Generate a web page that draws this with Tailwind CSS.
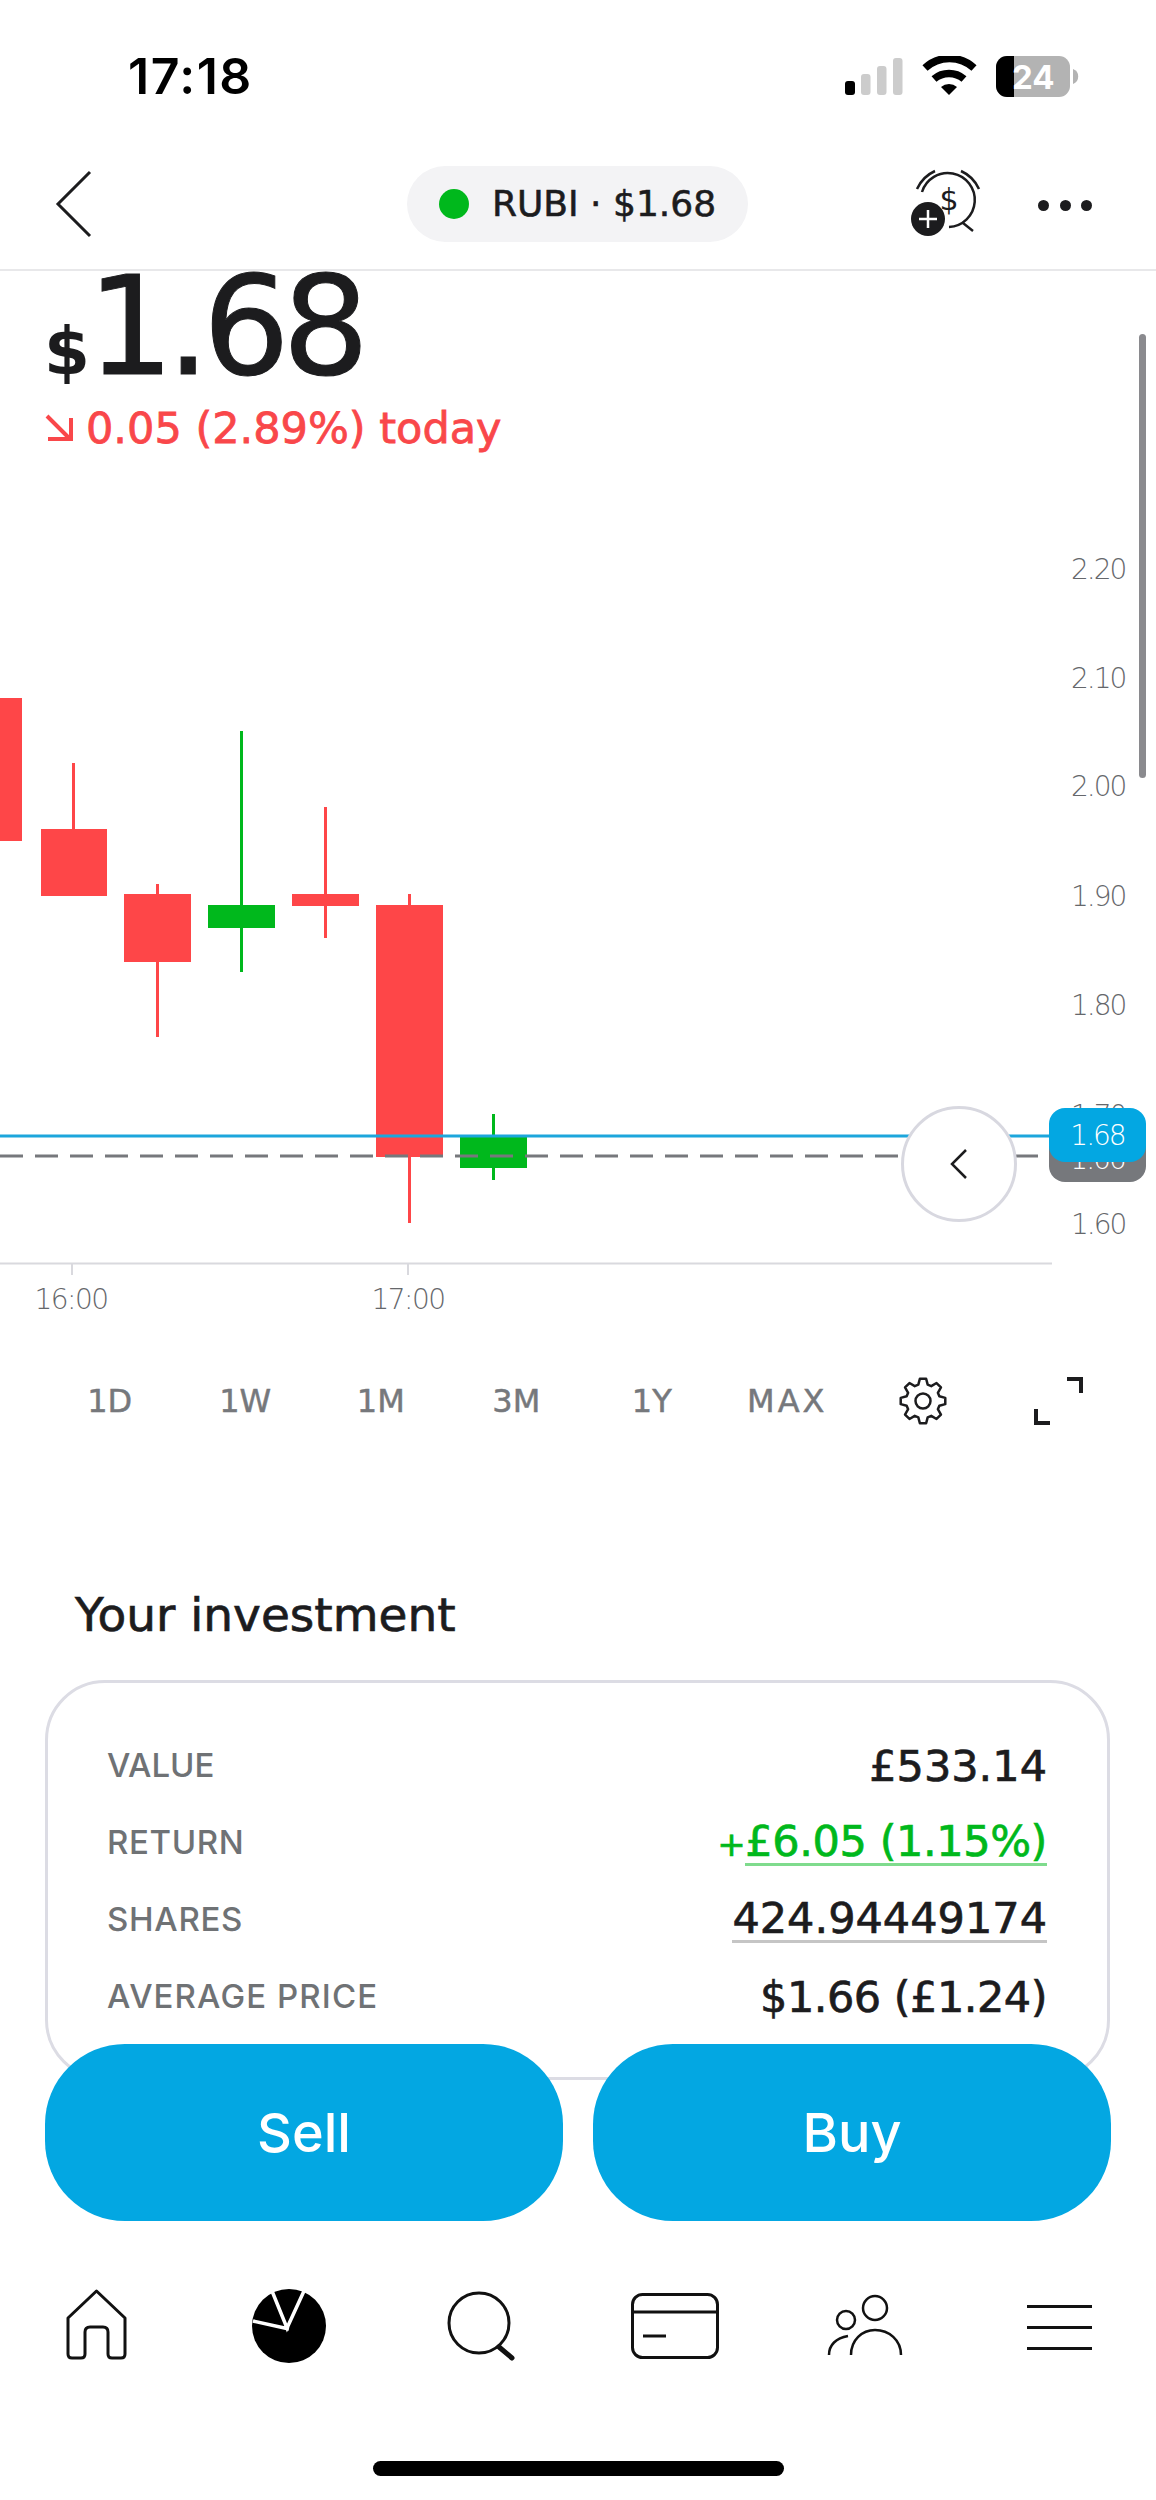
<!DOCTYPE html>
<html lang="en">
  <head>
    <meta charset="UTF-8" />
    <meta name="viewport" content="width=device-width, initial-scale=1.0" />
    <title>RUBI</title>
    <script src="https://cdn.jsdelivr.net/npm/@tailwindcss/browser@4"></script>
  </head>
  <body class="bg-white font-['Inter',sans-serif] text-[#1c1c1e]">
    <div class="relative w-[1156px] h-[2500px] overflow-hidden flex flex-col">
      <!-- scrollbar -->
      <div class="absolute left-[1139px] top-[334px] w-[7px] h-[444px] rounded-full bg-[#8a8a8e] z-20"></div>

      <!-- status bar -->
      <div class="h-[110px] flex items-start shrink-0">
        <span class="ml-[128px] mt-[47px] text-[50px] leading-[58px] font-semibold text-black tracking-[1.5px]">17:18</span>
        <svg class="ml-auto mr-[73px] mt-[56px]" width="240" height="44" viewBox="843 56 240 44">
          <rect x="845" y="81" width="10" height="14" rx="3" fill="#000" />
          <rect x="861" y="74" width="9.5" height="21" rx="3" fill="#ccc" />
          <rect x="877" y="66" width="9.5" height="29" rx="3" fill="#ccc" />
          <rect x="893" y="58" width="9.5" height="37" rx="3" fill="#ccc" />
          <path d="M925 68 A36 36 0 0 1 974 68" fill="none" stroke="#000" stroke-width="7.5" />
          <path d="M934 79 A23 23 0 0 1 964 79" fill="none" stroke="#000" stroke-width="7.5" />
          <path d="M941 87 L949 95 L957 87 A12 12 0 0 0 941 87 Z" fill="#000" />
          <path d="M1073 69 A8 8 0 0 1 1073 84 Z" fill="#b3b3b3" />
          <rect x="996" y="56" width="74" height="41" rx="11" fill="#b3b3b3" />
          <path d="M1014 56 H1007 A11 11 0 0 0 996 67 V86 A11 11 0 0 0 1007 97 H1014 Z" fill="#000" />
        </svg>
        <span class="absolute left-[1012px] top-[52px] text-[33px] leading-[50px] font-bold text-white">24</span>
      </div>

      <!-- header -->
      <div class="h-[161px] shrink-0 border-b-[2px] border-[#e8e8ea] flex items-center pt-[29px]">
        <svg class="ml-[55px] shrink-0" width="38" height="70" viewBox="0 0 38 70">
          <path d="M35 3 L3 35 L35 67" fill="none" stroke="#1c1c1e" stroke-width="3" />
        </svg>
        <div class="ml-[314px] w-[341px] h-[76px] shrink-0 rounded-full bg-[#f3f3f5] flex items-center">
          <span class="ml-[32px] w-[30px] h-[30px] rounded-full bg-[#00b81c]"></span>
          <span class="ml-[23px] font-['DejaVu_Sans',sans-serif] text-[36px] leading-[40px] [-webkit-text-stroke:0.6px] whitespace-nowrap">RUBI · $1.68</span>
        </div>
        <svg class="ml-[162px] shrink-0" width="74" height="72" viewBox="910 172 74 72">
          <path d="M922 196 A27 27 0 1 1 949 231" fill="none" stroke="#1c1c1e" stroke-width="2.5" />
          <path d="M917 193 A36 36 0 0 1 935 175" fill="none" stroke="#1c1c1e" stroke-width="2.5" />
          <path d="M961 175 A36 36 0 0 1 979 193" fill="none" stroke="#1c1c1e" stroke-width="2.5" />
          <path d="M963 227 L973 235" fill="none" stroke="#1c1c1e" stroke-width="2.5" />
          <text x="949" y="214" font-size="30" text-anchor="middle" font-family="DejaVu Sans" fill="#1c1c1e">$</text>
          <circle cx="928" cy="223" r="17" fill="#1c1c1e" />
          <path d="M928 214 V232 M919 223 H937" stroke="#fff" stroke-width="2.5" />
        </svg>
        <div class="ml-[54px] mt-[2px] flex gap-[10.5px] shrink-0">
          <span class="w-[11px] h-[11px] rounded-full bg-[#1c1c1e]"></span>
          <span class="w-[11px] h-[11px] rounded-full bg-[#1c1c1e]"></span>
          <span class="w-[11px] h-[11px] rounded-full bg-[#1c1c1e]"></span>
        </div>
      </div>

      <!-- price -->
      <div class="h-[199px] shrink-0 pl-[44px]">
        <div class="flex items-baseline h-[112px] leading-[112px] font-['DejaVu_Sans',sans-serif]">
          <span class="text-[66px] font-bold">$</span>
          <span class="-ml-[3px] text-[137px] font-normal tracking-[-7.5px] [-webkit-text-stroke:1px]">1.68</span>
        </div>
        <div class="flex items-center mt-[15px] text-[#f9474a] font-['DejaVu_Sans',sans-serif] text-[43px] leading-[60px] [-webkit-text-stroke:0.8px]">
          <svg class="mr-[12px]" width="30" height="30" viewBox="0 0 30 30">
            <path d="M3 3 L26 26 M4 26 H27 V5" fill="none" stroke="#f9474a" stroke-width="4" />
          </svg>
          <span>0.05 (2.89%) today</span>
        </div>
      </div>

      <!-- chart -->
      <div class="relative h-[850px] shrink-0">
        <svg class="absolute inset-0" width="1156" height="850" viewBox="0 470 1156 850">
          <g fill="#fe4648">
            <rect x="0" y="698" width="22" height="143" />
            <rect x="72" y="763" width="3" height="70" />
            <rect x="41" y="829" width="66" height="67" />
            <rect x="156" y="884" width="3" height="153" />
            <rect x="124" y="894" width="67" height="68" />
            <rect x="324" y="807" width="3" height="131" />
            <rect x="292" y="894" width="67" height="12" />
            <rect x="408" y="894" width="3" height="329" />
            <rect x="376" y="905" width="67" height="252" />
          </g>
          <g fill="#00b81c">
            <rect x="240" y="731" width="3" height="241" />
            <rect x="208" y="905" width="67" height="23" />
            <rect x="492" y="1114" width="3" height="66" />
            <rect x="460" y="1136" width="67" height="32" />
          </g>
          <line x1="0" y1="1156" x2="1050" y2="1156" stroke="#76787c" stroke-width="3" stroke-dasharray="23 12" />
          <line x1="0" y1="1136" x2="1050" y2="1136" stroke="#1ca6dc" stroke-width="3" />
          <line x1="0" y1="1263.5" x2="1052" y2="1263.5" stroke="#d9d9de" stroke-width="2" />
          <line x1="72" y1="1263" x2="72" y2="1275" stroke="#d9d9de" stroke-width="2" />
          <line x1="408" y1="1263" x2="408" y2="1275" stroke="#d9d9de" stroke-width="2" />
        </svg>

        <span class="absolute left-[1071px] top-[100px] -translate-y-1/2 font-['DejaVu_Sans',sans-serif] text-[28px] font-extralight text-[#65676b] tracking-[-2px]">2.20</span>
        <span class="absolute left-[1071px] top-[209px] -translate-y-1/2 font-['DejaVu_Sans',sans-serif] text-[28px] font-extralight text-[#65676b] tracking-[-2px]">2.10</span>
        <span class="absolute left-[1071px] top-[317px] -translate-y-1/2 font-['DejaVu_Sans',sans-serif] text-[28px] font-extralight text-[#65676b] tracking-[-2px]">2.00</span>
        <span class="absolute left-[1071px] top-[427px] -translate-y-1/2 font-['DejaVu_Sans',sans-serif] text-[28px] font-extralight text-[#65676b] tracking-[-2px]">1.90</span>
        <span class="absolute left-[1071px] top-[536px] -translate-y-1/2 font-['DejaVu_Sans',sans-serif] text-[28px] font-extralight text-[#65676b] tracking-[-2px]">1.80</span>
        <span class="absolute left-[1071px] top-[646px] -translate-y-1/2 font-['DejaVu_Sans',sans-serif] text-[28px] font-extralight text-[#65676b] tracking-[-2px]">1.70</span>
        <span class="absolute left-[1071px] top-[755px] -translate-y-1/2 font-['DejaVu_Sans',sans-serif] text-[28px] font-extralight text-[#65676b] tracking-[-2px]">1.60</span>

        <span class="absolute left-[71px] top-[830px] -translate-x-1/2 -translate-y-1/2 font-['DejaVu_Sans',sans-serif] text-[28px] font-extralight text-[#65676b] tracking-[-1.5px]">16:00</span>
        <span class="absolute left-[408px] top-[830px] -translate-x-1/2 -translate-y-1/2 font-['DejaVu_Sans',sans-serif] text-[28px] font-extralight text-[#65676b] tracking-[-1.5px]">17:00</span>

        <!-- price tags -->
        <div class="absolute left-[1049px] top-[660px] w-[97px] h-[52px] rounded-[16px] bg-[#76787c] flex items-end justify-center text-white font-['DejaVu_Sans',sans-serif] text-[28px] font-extralight leading-[44px] tracking-[-2px]">1.66</div>
        <div class="absolute left-[1049px] top-[638px] w-[97px] h-[54px] pt-[2px] rounded-[16px] bg-[#03a7e2] flex items-center justify-center text-white font-['DejaVu_Sans',sans-serif] text-[28px] font-extralight tracking-[-2px]">1.68</div>

        <!-- scroll to latest -->
        <div class="absolute left-[901px] top-[636px] w-[116px] h-[116px] rounded-full bg-white border-[3px] border-[#d8d8e0] flex items-center justify-center">
          <svg width="18" height="32" viewBox="0 0 18 32">
            <path d="M16 2 L2 16 L16 30" fill="none" stroke="#1c1c1e" stroke-width="2.5" />
          </svg>
        </div>
      </div>

      <!-- ranges -->
      <div class="h-[162px] shrink-0 pl-[42px] flex items-start font-['DejaVu_Sans',sans-serif] text-[32px] leading-[40px] [-webkit-text-stroke:0.5px] text-[#76787c]">
        <span class="w-[135.5px] mt-[61px] text-center">1D</span>
        <span class="w-[135.5px] mt-[61px] text-center">1W</span>
        <span class="w-[135.5px] mt-[61px] text-center">1M</span>
        <span class="w-[135.5px] mt-[61px] text-center">3M</span>
        <span class="w-[135.5px] mt-[61px] text-center">1Y</span>
        <span class="w-[135.5px] mt-[61px] text-center tracking-[3px]">MAX</span>
        <span class="w-[135.5px] mt-[57px] flex justify-center">
          <svg width="48" height="48" viewBox="0 0 48 48">
            <polygon points="19.31,7.66 20.87,1.72 27.13,1.72 28.69,7.66 32.24,9.13 37.54,6.03 41.97,10.46 38.87,15.76 40.34,19.31 46.28,20.87 46.28,27.13 40.34,28.69 38.87,32.24 41.97,37.54 37.54,41.97 32.24,38.87 28.69,40.34 27.13,46.28 20.87,46.28 19.31,40.34 15.76,38.87 10.46,41.97 6.03,37.54 9.13,32.24 7.66,28.69 1.72,27.13 1.72,20.87 7.66,19.31 9.13,15.76 6.03,10.46 10.46,6.03 15.76,9.13" fill="none" stroke="#1c1c1e" stroke-width="2.5" stroke-linejoin="round" />
            <circle cx="24" cy="24" r="7.5" fill="none" stroke="#1c1c1e" stroke-width="2.5" />
          </svg>
        </span>
        <span class="w-[135.5px] mt-[56px] flex justify-center">
          <svg width="50" height="50" viewBox="0 0 50 50">
            <path d="M34 3 H48 V17 M3 33 V47 H17" fill="none" stroke="#1c1c1e" stroke-width="4" />
          </svg>
        </span>
      </div>

      <!-- your investment -->
      <div class="ml-[75px] mt-[100px] h-[66px] shrink-0 flex items-center font-['DejaVu_Sans',sans-serif] text-[47px] [-webkit-text-stroke:0.7px]">Your investment</div>

      <div class="mt-[32px] ml-[45px] w-[1065px] h-[400px] shrink-0 rounded-[60px] border-[3px] border-[#dcdce4] pt-[44px] pl-[59px] pr-[60px]">
        <div class="h-[77px] flex items-center justify-between">
          <span class="text-[33px] font-medium text-[#6f7275]">VALUE</span>
          <span class="font-['DejaVu_Sans',sans-serif] text-[43px] leading-[44px] [-webkit-text-stroke:0.7px]">£533.14</span>
        </div>
        <div class="h-[77px] flex items-center justify-between">
          <span class="text-[33px] font-medium text-[#6f7275] tracking-[0.6px]">RETURN</span>
          <span class="font-['DejaVu_Sans',sans-serif] text-[43px] leading-[44px] [-webkit-text-stroke:0.7px] text-[#00b81c] tracking-[-0.4px]"><span class="text-[34px]">+</span><span class="inline-block border-b-[3px] border-[#00b81c]/50">£6.05 (1.15%)</span></span>
        </div>
        <div class="h-[77px] flex items-center justify-between">
          <span class="text-[33px] font-medium text-[#6f7275] tracking-[0.7px]">SHARES</span>
          <span class="font-['DejaVu_Sans',sans-serif] text-[43px] leading-[44px] [-webkit-text-stroke:0.7px] border-b-[3px] border-[#c5c5c5]">424.94449174</span>
        </div>
        <div class="h-[77px] flex items-center justify-between">
          <span class="text-[33px] font-medium text-[#6f7275] tracking-[1.1px]">AVERAGE PRICE</span>
          <span class="font-['DejaVu_Sans',sans-serif] text-[43px] leading-[44px] [-webkit-text-stroke:0.7px] tracking-[-0.5px]">$1.66 (£1.24)</span>
        </div>
      </div>

      <!-- sell / buy overlaps the card -->
      <div class="-mt-[36px] ml-[45px] flex gap-[30px] h-[177px] shrink-0 relative">
        <div class="w-[518px] rounded-[80px] bg-[#03a7e2] flex items-center justify-center text-white text-[54px] font-medium">Sell</div>
        <div class="w-[518px] rounded-[80px] bg-[#03a7e2] flex items-center justify-center text-white text-[54px] font-medium">Buy</div>
      </div>

      <!-- bottom nav -->
      <div class="h-[210px] shrink-0">
        <svg width="1156" height="210" viewBox="0 2221 1156 210">
          <!-- home -->
          <path d="M96.5 2291 L68 2318 V2354 Q68 2358 72 2358 H81 Q85 2358 85 2354 V2332 Q85 2327 90 2327 H103 Q108 2327 108 2332 V2354 Q108 2358 112 2358 H121 Q125 2358 125 2354 V2318 Z" fill="none" stroke="#111" stroke-width="3" stroke-linejoin="round" />
          <!-- portfolio -->
          <circle cx="289" cy="2326" r="37" fill="#000" />
          <path d="M272 2291 L287 2328 L304 2291 M253 2321 L289 2329" fill="none" stroke="#fff" stroke-width="3.5" />
          <!-- search -->
          <circle cx="479" cy="2323" r="30" fill="none" stroke="#111" stroke-width="3" />
          <path d="M499 2347 L512 2358" fill="none" stroke="#111" stroke-width="5" stroke-linecap="round" />
          <!-- card -->
          <rect x="632.5" y="2294.5" width="85" height="63" rx="10" fill="none" stroke="#111" stroke-width="3" />
          <path d="M632 2312 H718" stroke="#111" stroke-width="3" />
          <path d="M643 2336 H666" stroke="#111" stroke-width="3" />
          <!-- people -->
          <circle cx="875" cy="2308" r="12" fill="none" stroke="#111" stroke-width="2.5" />
          <circle cx="846" cy="2320" r="9" fill="none" stroke="#111" stroke-width="2.5" />
          <path d="M851 2355 C851 2340 862 2330 875 2330 C889 2330 901 2340 901 2355" fill="none" stroke="#111" stroke-width="2.5" />
          <path d="M829 2355 C829 2345 836 2338 848 2336" fill="none" stroke="#111" stroke-width="2.5" />
          <!-- menu -->
          <path d="M1027 2306.5 H1092 M1027 2327.5 H1092 M1027 2348.5 H1092" stroke="#111" stroke-width="3" />
        </svg>
      </div>

      <div class="mt-[30px] ml-[373px] w-[411px] h-[15px] shrink-0 rounded-full bg-black"></div>
    </div>
  </body>
</html>
